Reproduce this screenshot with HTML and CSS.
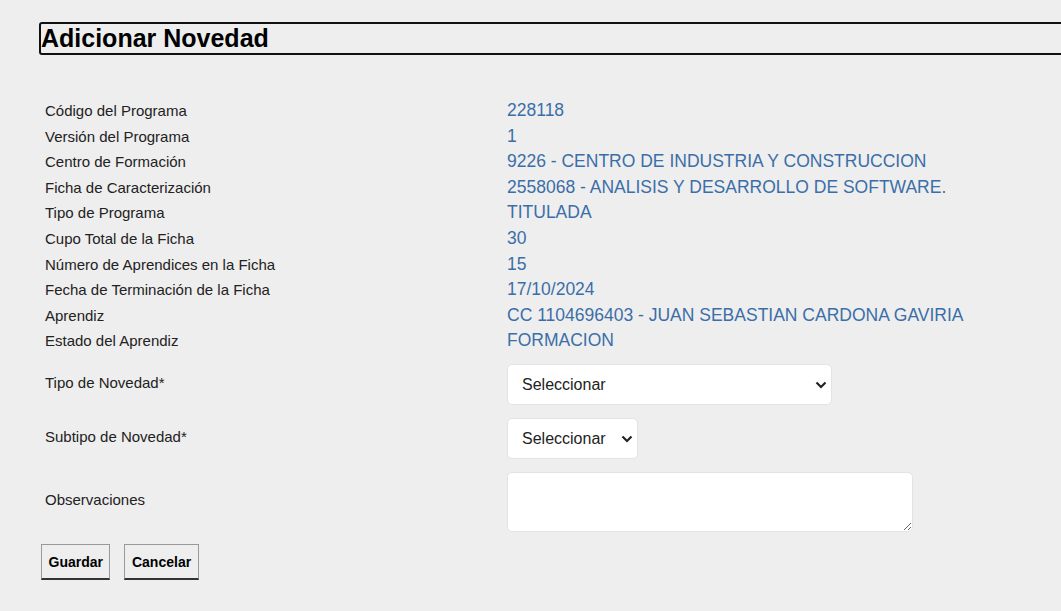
FILE: index.html
```html
<!DOCTYPE html>
<html lang="es">
<head>
  <meta charset="UTF-8" />
  <title>Adicionar Novedad</title>
  <link rel="stylesheet" href="styles.css">
</head>
<body>

<div class="page">
  <h1 class="title">Adicionar Novedad</h1>

  <!-- Datos de la ficha y del aprendiz -->
  <div class="info">
    <div class="label">Código del Programa</div>
    <div class="value">228118</div>
    <div class="label">Versión del Programa</div>
    <div class="value">1</div>
    <div class="label">Centro de Formación</div>
    <div class="value">9226 - CENTRO DE INDUSTRIA Y CONSTRUCCION</div>
    <div class="label">Ficha de Caracterización</div>
    <div class="value">2558068 - ANALISIS Y DESARROLLO DE SOFTWARE.</div>
    <div class="label">Tipo de Programa</div>
    <div class="value">TITULADA</div>
    <div class="label">Cupo Total de la Ficha</div>
    <div class="value">30</div>
    <div class="label">Número de Aprendices en la Ficha</div>
    <div class="value">15</div>
    <div class="label">Fecha de Terminación de la Ficha</div>
    <div class="value">17/10/2024</div>
    <div class="label">Aprendiz</div>
    <div class="value">CC 1104696403 - JUAN SEBASTIAN CARDONA GAVIRIA</div>
    <div class="label">Estado del Aprendiz</div>
    <div class="value">FORMACION</div>
  </div>

  <!-- Formulario -->
  <form class="form">
    <label class="field-label" for="tipo">Tipo de Novedad*</label>
    <select id="tipo" class="select select-wide">
      <option>Seleccionar</option>
    </select>

    <label class="field-label" for="subtipo">Subtipo de Novedad*</label>
    <select id="subtipo" class="select select-small">
      <option>Seleccionar</option>
    </select>

    <label class="field-label" for="obs">Observaciones</label>
    <textarea id="obs" class="textarea"></textarea>
  </form>

  <div class="actions">
    <button type="button" class="btn">Guardar</button>
    <button type="button" class="btn">Cancelar</button>
  </div>
</div>

</body>
</html>
```

FILE: styles.css
```css
* {
  margin: 0;
  padding: 0;
  box-sizing: border-box;
}

html, body {
  background: #eeeeee;
  font-family: 'Liberation Sans', Arial, sans-serif;
  color: #222;
  overflow: hidden;
}

.page {
  padding: 22px 0 0 39px;
}

/* Title bar, runs past the right edge */
.title {
  height: 33px;
  font-size: 25px;
  font-weight: bold;
  line-height: 29px;
  color: #000;
  border: 2px solid #111;
  border-radius: 3px;
  margin-right: -40px;
}

/* Info table */
.info {
  display: grid;
  grid-template-columns: 462px 1fr;
  grid-auto-rows: 25.55px;
  align-items: center;
  margin-top: 43px;
  padding-left: 6px;
}

.label {
  font-size: 15px;
  color: #222;
}

.value {
  font-size: 17.5px;
  color: #3b6ea8;
}

/* Form rows */
.form {
  display: grid;
  grid-template-columns: 462px 1fr;
  row-gap: 13px;
  align-items: center;
  margin-top: 11px;
  padding-left: 6px;
}

.field-label {
  font-size: 15px;
  color: #222;
  margin-bottom: 5px;
}

.select {
  appearance: none;
  -webkit-appearance: none;
  height: 41px;
  font-family: 'Liberation Sans', Arial, sans-serif;
  font-size: 16px;
  color: #222;
  background: #fff url("data:image/svg+xml,%3Csvg xmlns='http://www.w3.org/2000/svg' width='12' height='8' viewBox='0 0 12 8'%3E%3Cpath d='M1.5 1.5 6 6l4.5-4.5' fill='none' stroke='%23222' stroke-width='2.2'/%3E%3C/svg%3E") no-repeat right 4px center;
  border: 1px solid #e3e3e3;
  border-radius: 5px;
  padding: 0 14px;
}

.select-wide {
  width: 325px;
}

.select-small {
  width: 131px;
}

.textarea {
  width: 406px;
  height: 60px;
  background: #fff;
  border: 1px solid #e3e3e3;
  border-radius: 5px;
  font-family: 'Liberation Sans', Arial, sans-serif;
  font-size: 14px;
  padding: 4px;
}

/* Buttons */
.actions {
  display: flex;
  gap: 14px;
  margin-top: 12px;
  padding-left: 2px;
}

.btn {
  height: 36px;
  padding: 0 6.5px;
  font-family: 'Liberation Sans', Arial, sans-serif;
  font-size: 14px;
  font-weight: bold;
  color: #000;
  background: #eeeeee;
  border: 1px solid #999;
  border-bottom: 2px solid #333;
  cursor: pointer;
}
```
